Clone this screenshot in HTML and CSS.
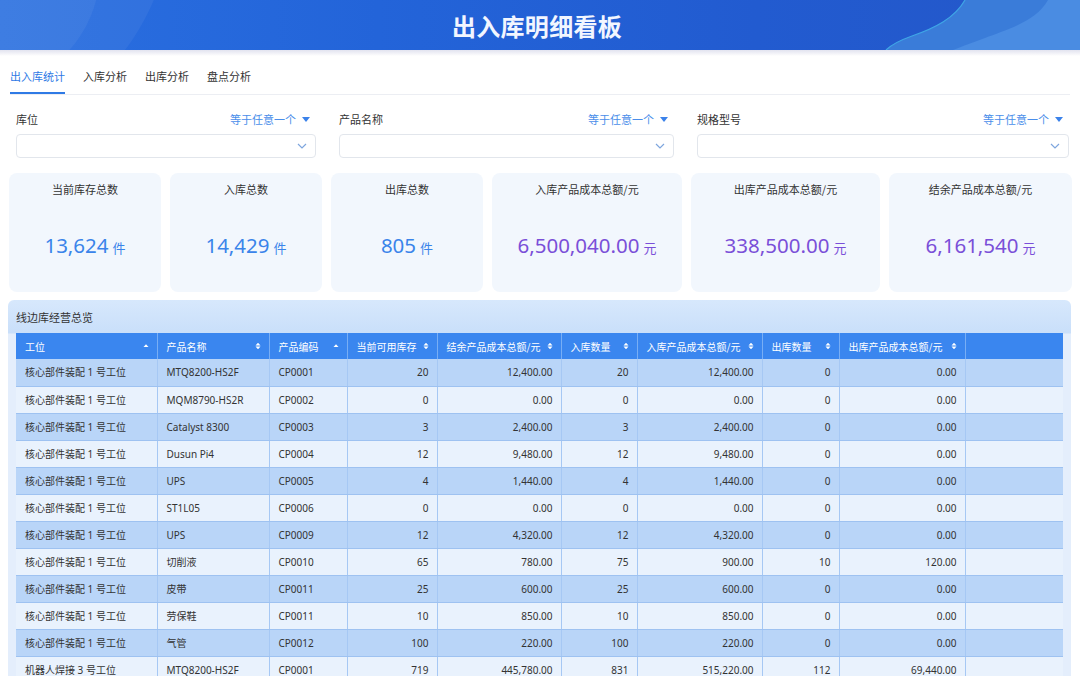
FILE: index.html
```html
<!DOCTYPE html>
<html lang="zh">
<head>
<meta charset="utf-8">
<title>出入库明细看板</title>
<link rel="stylesheet" href="styles.css">
</head>
<body>
<div class="page">
  <header class="header">
    <svg class="header-deco" width="1080" height="50" viewBox="0 0 1080 50" aria-hidden="true">
      <circle cx="-60" cy="-90" r="232" fill="#ffffff" fill-opacity="0.05"/>
      <circle cx="-20" cy="-30" r="120" fill="#ffffff" fill-opacity="0.05"/>
      <path d="M965 0 C955 18 935 28 912 36 C898 41 890 46 886 50 L1080 50 L1080 0 Z" fill="#3a7cd9"/>
      <path d="M965 0 C955 18 935 28 912 36 C898 41 890 46 886 50" fill="none" stroke="#3fa6e6" stroke-width="1.2"/>
      <path d="M1048 0 C1036 22 1005 30 985 38 C968 44 958 48 953 50 L1080 50 L1080 0 Z" fill="#4a8ce2"/>
    </svg>
    <h1 class="title">出入库明细看板</h1>
  </header>
  <div class="header-shadow"></div>

  <nav class="tabs">
    <span class="tab active">出入库统计</span>
    <span class="tab">入库分析</span>
    <span class="tab">出库分析</span>
    <span class="tab">盘点分析</span>
  </nav>

  <section class="filters">
    <div class="filter">
      <div class="filter-head"><span class="filter-label">库位</span><span class="filter-op">等于任意一个<i class="caret"></i></span></div>
      <div class="select"><svg class="chev" width="10" height="6" viewBox="0 0 10 6"><path d="M1 1 L5 5 L9 1" fill="none" stroke="#7ea6de" stroke-width="1.2"/></svg></div>
    </div>
    <div class="filter">
      <div class="filter-head"><span class="filter-label">产品名称</span><span class="filter-op">等于任意一个<i class="caret"></i></span></div>
      <div class="select"><svg class="chev" width="10" height="6" viewBox="0 0 10 6"><path d="M1 1 L5 5 L9 1" fill="none" stroke="#7ea6de" stroke-width="1.2"/></svg></div>
    </div>
    <div class="filter">
      <div class="filter-head"><span class="filter-label">规格型号</span><span class="filter-op">等于任意一个<i class="caret"></i></span></div>
      <div class="select"><svg class="chev" width="10" height="6" viewBox="0 0 10 6"><path d="M1 1 L5 5 L9 1" fill="none" stroke="#7ea6de" stroke-width="1.2"/></svg></div>
    </div>
  </section>

  <section class="cards">
    <div class="card"><div class="card-label">当前库存总数</div><div class="card-value blue">13,624<span class="unit">件</span></div></div>
    <div class="card"><div class="card-label">入库总数</div><div class="card-value blue">14,429<span class="unit">件</span></div></div>
    <div class="card"><div class="card-label">出库总数</div><div class="card-value blue">805<span class="unit">件</span></div></div>
    <div class="card"><div class="card-label">入库产品成本总额/元</div><div class="card-value purple">6,500,040.00<span class="unit">元</span></div></div>
    <div class="card"><div class="card-label">出库产品成本总额/元</div><div class="card-value purple">338,500.00<span class="unit">元</span></div></div>
    <div class="card"><div class="card-label">结余产品成本总额/元</div><div class="card-value purple">6,161,540<span class="unit">元</span></div></div>
  </section>

  <section class="panel">
    <div class="panel-title">线边库经营总览</div>
    <table class="grid">
      <colgroup>
        <col class="w141"><col class="w112"><col class="w78"><col class="w90"><col class="w124"><col class="w76"><col class="w125"><col class="w77"><col class="w126"><col>
      </colgroup>
      <thead>
        <tr>
          <th><div class="th">工位<svg class="sort" width="6" height="8" viewBox="0 0 6 8"><path d="M0.5 5 L3 2.2 L5.5 5 Z" fill="#fff"/></svg></div></th>
          <th><div class="th">产品名称<svg class="sort" width="6" height="8" viewBox="0 0 6 8"><path d="M0.5 3.4 L3 0.8 L5.5 3.4 Z M0.5 4.6 L3 7.2 L5.5 4.6 Z" fill="#fff"/></svg></div></th>
          <th><div class="th">产品编码<svg class="sort" width="6" height="8" viewBox="0 0 6 8"><path d="M0.5 5 L3 2.2 L5.5 5 Z" fill="#fff"/></svg></div></th>
          <th><div class="th">当前可用库存<svg class="sort" width="6" height="8" viewBox="0 0 6 8"><path d="M0.5 3.4 L3 0.8 L5.5 3.4 Z M0.5 4.6 L3 7.2 L5.5 4.6 Z" fill="#fff"/></svg></div></th>
          <th><div class="th">结余产品成本总额/元<svg class="sort" width="6" height="8" viewBox="0 0 6 8"><path d="M0.5 3.4 L3 0.8 L5.5 3.4 Z M0.5 4.6 L3 7.2 L5.5 4.6 Z" fill="#fff"/></svg></div></th>
          <th><div class="th">入库数量<svg class="sort" width="6" height="8" viewBox="0 0 6 8"><path d="M0.5 3.4 L3 0.8 L5.5 3.4 Z M0.5 4.6 L3 7.2 L5.5 4.6 Z" fill="#fff"/></svg></div></th>
          <th><div class="th">入库产品成本总额/元<svg class="sort" width="6" height="8" viewBox="0 0 6 8"><path d="M0.5 3.4 L3 0.8 L5.5 3.4 Z M0.5 4.6 L3 7.2 L5.5 4.6 Z" fill="#fff"/></svg></div></th>
          <th><div class="th">出库数量<svg class="sort" width="6" height="8" viewBox="0 0 6 8"><path d="M0.5 3.4 L3 0.8 L5.5 3.4 Z M0.5 4.6 L3 7.2 L5.5 4.6 Z" fill="#fff"/></svg></div></th>
          <th><div class="th">出库产品成本总额/元<svg class="sort" width="6" height="8" viewBox="0 0 6 8"><path d="M0.5 3.4 L3 0.8 L5.5 3.4 Z M0.5 4.6 L3 7.2 L5.5 4.6 Z" fill="#fff"/></svg></div></th>
          <th></th>
        </tr>
      </thead>
      <tbody>
        <tr class="odd"><td>核心部件装配 1 号工位</td><td>MTQ8200-HS2F</td><td>CP0001</td><td class="num">20</td><td class="num">12,400.00</td><td class="num">20</td><td class="num">12,400.00</td><td class="num">0</td><td class="num">0.00</td><td></td></tr>
        <tr class="even"><td>核心部件装配 1 号工位</td><td>MQM8790-HS2R</td><td>CP0002</td><td class="num">0</td><td class="num">0.00</td><td class="num">0</td><td class="num">0.00</td><td class="num">0</td><td class="num">0.00</td><td></td></tr>
        <tr class="odd"><td>核心部件装配 1 号工位</td><td>Catalyst 8300</td><td>CP0003</td><td class="num">3</td><td class="num">2,400.00</td><td class="num">3</td><td class="num">2,400.00</td><td class="num">0</td><td class="num">0.00</td><td></td></tr>
        <tr class="even"><td>核心部件装配 1 号工位</td><td>Dusun Pi4</td><td>CP0004</td><td class="num">12</td><td class="num">9,480.00</td><td class="num">12</td><td class="num">9,480.00</td><td class="num">0</td><td class="num">0.00</td><td></td></tr>
        <tr class="odd"><td>核心部件装配 1 号工位</td><td>UPS</td><td>CP0005</td><td class="num">4</td><td class="num">1,440.00</td><td class="num">4</td><td class="num">1,440.00</td><td class="num">0</td><td class="num">0.00</td><td></td></tr>
        <tr class="even"><td>核心部件装配 1 号工位</td><td>ST1L05</td><td>CP0006</td><td class="num">0</td><td class="num">0.00</td><td class="num">0</td><td class="num">0.00</td><td class="num">0</td><td class="num">0.00</td><td></td></tr>
        <tr class="odd"><td>核心部件装配 1 号工位</td><td>UPS</td><td>CP0009</td><td class="num">12</td><td class="num">4,320.00</td><td class="num">12</td><td class="num">4,320.00</td><td class="num">0</td><td class="num">0.00</td><td></td></tr>
        <tr class="even"><td>核心部件装配 1 号工位</td><td>切削液</td><td>CP0010</td><td class="num">65</td><td class="num">780.00</td><td class="num">75</td><td class="num">900.00</td><td class="num">10</td><td class="num">120.00</td><td></td></tr>
        <tr class="odd"><td>核心部件装配 1 号工位</td><td>皮带</td><td>CP0011</td><td class="num">25</td><td class="num">600.00</td><td class="num">25</td><td class="num">600.00</td><td class="num">0</td><td class="num">0.00</td><td></td></tr>
        <tr class="even"><td>核心部件装配 1 号工位</td><td>劳保鞋</td><td>CP0011</td><td class="num">10</td><td class="num">850.00</td><td class="num">10</td><td class="num">850.00</td><td class="num">0</td><td class="num">0.00</td><td></td></tr>
        <tr class="odd"><td>核心部件装配 1 号工位</td><td>气管</td><td>CP0012</td><td class="num">100</td><td class="num">220.00</td><td class="num">100</td><td class="num">220.00</td><td class="num">0</td><td class="num">0.00</td><td></td></tr>
        <tr class="even"><td>机器人焊接 3 号工位</td><td>MTQ8200-HS2F</td><td>CP0001</td><td class="num">719</td><td class="num">445,780.00</td><td class="num">831</td><td class="num">515,220.00</td><td class="num">112</td><td class="num">69,440.00</td><td></td></tr>
      </tbody>
    </table>
  </section>
</div>
</body>
</html>
```

FILE: styles.css
```css
* { box-sizing: border-box; }
html, body { margin: 0; padding: 0; }
body {
  width: 1080px;
  height: 676px;
  overflow: hidden;
  background: #ffffff;
  font-family: "Noto Sans", "Noto Sans CJK SC", sans-serif;
  color: #333;
}
.page { width: 1080px; }

.header {
  position: relative;
  height: 50px;
  overflow: hidden;
  background: linear-gradient(90deg, #2a6fe0 0%, #2364d9 35%, #225bd0 70%, #2457c9 100%);
  display: flex;
  align-items: center;
  justify-content: center;
}
.header-deco { position: absolute; left: 0; top: 0; }
.title {
  position: relative;
  margin: 2px 0 0 -6px;
  font-family: "Noto Sans CJK SC", sans-serif;
  font-size: 24px;
  font-weight: 700;
  color: #f2f6ff;
  letter-spacing: 0.3px;
  line-height: 30px;
}
.header-shadow {
  height: 6px;
  background: linear-gradient(180deg, #e2e3ef 0%, #f3f3f8 60%, #ffffff 100%);
}

.tabs {
  display: flex;
  gap: 18px;
  margin: 0 10px;
  border-bottom: 1px solid #eceef3;
}
.tab {
  font-family: "Noto Sans CJK SC", sans-serif;
  font-size: 11px;
  line-height: 16px;
  padding: 12px 0 8px;
  color: #333;
  border-bottom: 2px solid transparent;
}
.tab.active { color: #2f7ae5; border-bottom-color: #2f7ae5; }

.filters {
  display: grid;
  grid-template-columns: 300px 335px 372px;
  column-gap: 23px;
  padding: 16px 0 0 16px;
}
.filter-head {
  display: flex;
  justify-content: space-between;
  align-items: center;
  height: 16px;
  padding-right: 6px;
  font-family: "Noto Sans CJK SC", sans-serif;
  font-size: 11px;
}
.filter-label { color: #333; }
.filter-op { color: #4a8eea; display: flex; align-items: center; }
.caret {
  display: inline-block;
  width: 0; height: 0;
  margin-left: 6px;
  border-left: 4px solid transparent;
  border-right: 4px solid transparent;
  border-top: 5px solid #3b82ea;
}
.select {
  margin-top: 7px;
  height: 24px;
  border: 1px solid #e2e6ec;
  border-radius: 4px;
  background: #fff;
  display: flex;
  align-items: center;
  justify-content: flex-end;
  padding-right: 8px;
}

.cards {
  display: grid;
  grid-template-columns: 152px 152px 152px 190px 189px 183px;
  column-gap: 9px;
  padding-left: 9px;
  margin-top: 15px;
}
.card {
  height: 119px;
  background: #f2f7fd;
  border-radius: 8px;
  display: flex;
  flex-direction: column;
  align-items: center;
}
.card-label {
  margin-top: 8px;
  font-family: "Noto Sans CJK SC", sans-serif;
  font-size: 11px;
  line-height: 16px;
  color: #333;
}
.card-value {
  flex: 1;
  display: flex;
  align-items: center;
  font-family: "Noto Sans", sans-serif;
  font-size: 20.5px;
  line-height: 28px;
  padding-top: 1px;
}
.card-value .unit {
  font-family: "Noto Sans CJK SC", sans-serif;
  font-size: 13px;
  margin-left: 4px;
  margin-top: 5px;
}
.blue { color: #3a84ea; }
.purple { color: #7a4fd8; }

.panel {
  margin: 8px 0 0 8px;
  width: 1063px;
  height: 400px;
  padding: 0 8px;
  border-radius: 6px 6px 0 0;
  background: linear-gradient(180deg, #d7e8fc 0px, #c9dffa 33px, #e4eefc 34px, #e4eefc 100%);
  overflow: hidden;
}
.panel-title {
  height: 33px;
  display: flex;
  align-items: center;
  font-family: "Noto Sans CJK SC", sans-serif;
  font-size: 11px;
  color: #333;
  padding-top: 1px;
}

.grid {
  width: 1047px;
  border-collapse: collapse;
  table-layout: fixed;
  font-size: 10px;
}
.w141 { width: 141px; }
.w112 { width: 112px; }
.w78 { width: 78px; }
.w90 { width: 90px; }
.w124 { width: 124px; }
.w76 { width: 76px; }
.w125 { width: 125px; }
.w77 { width: 77px; }
.w126 { width: 126px; }

.grid thead th {
  height: 26px;
  background: #3a86ef;
  color: #fff;
  font-weight: 400;
  text-align: left;
  padding: 0;
  border-right: 1px solid #78aef5;
  font-family: "Noto Sans CJK SC", sans-serif;
}
.grid thead th:last-child { border-right: none; }
.th {
  display: flex;
  align-items: center;
  justify-content: space-between;
  padding: 0 8px 0 9px;
  white-space: nowrap;
}
.sort { flex: none; }

.grid tbody td {
  height: 27px;
  padding: 0 8px 0 9px;
  white-space: nowrap;
  overflow: hidden;
  color: #333;
  border-right: 1px solid #a6c8f4;
  border-bottom: 1px solid #9ec2f1;
  font-family: "Noto Sans", "Noto Sans CJK SC", sans-serif;
  line-height: 14px;
}
.grid tbody td:last-child { border-right: none; }
.grid tbody td.num { text-align: right; }
.grid tbody tr.odd td { background: #b9d5f8; }
.grid tbody tr.even td { background: #e9f2fd; }
```
